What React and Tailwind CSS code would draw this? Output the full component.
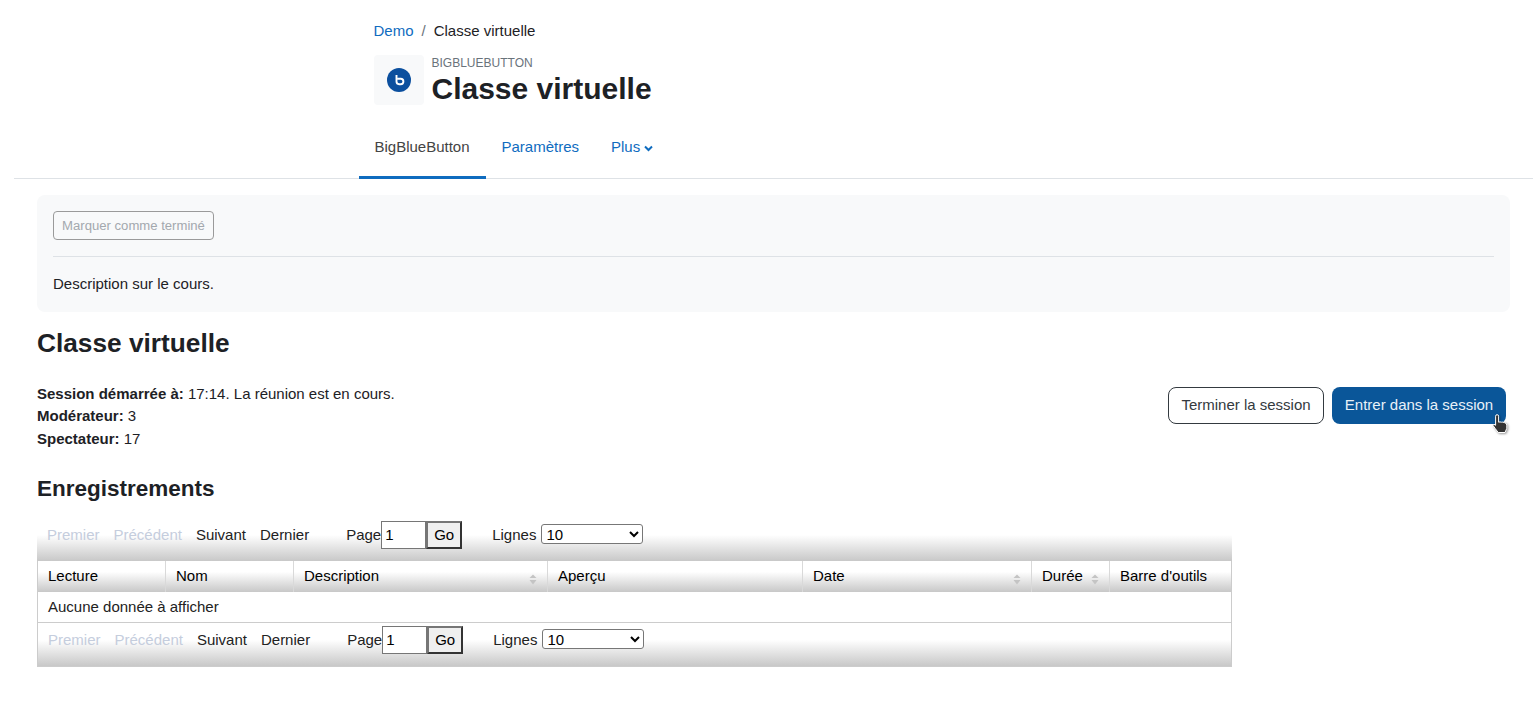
const columns = [
  { label: 'Lecture', width: 'w-[128px]' },
  { label: 'Nom', width: 'w-[128px]' },
  { label: 'Description', width: 'w-[254px]', sort: true },
  { label: 'Aperçu', width: 'w-[255px]' },
  { label: 'Date', width: 'w-[229px]', sort: true },
  { label: 'Durée', width: 'w-[78px]', sort: true },
  { label: "Barre d'outils", width: 'flex-1' },
]

function SortIcon() {
  return (
    <svg width="8" height="11" viewBox="0 0 8 11" className="absolute right-[10px] top-[13px]">
      <path d="M4 0.5 L7.5 4 H0.5 Z" fill="#c4c4c4" />
      <path d="M4 10.5 L7.5 6 H0.5 Z" fill="#c4c4c4" />
    </svg>
  )
}

function Pagination() {
  return (
    <div className="flex h-[40px] items-start bg-gradient-to-b from-white from-[35%] to-[#c8c8c8] pl-[10px] text-[15px] text-[#222]">
      <div className="flex h-[28px] items-center">
        <span className="text-[#c5cddd]">Premier</span>
        <span className="ml-[14px] text-[#c5cddd]">Précédent</span>
        <span className="ml-[14px]">Suivant</span>
        <span className="ml-[14px]">Dernier</span>
        <span className="ml-[37px]">Page</span>
        <input
          readOnly
          value="1"
          className="h-[28px] w-[45px] border border-[#767676] bg-white px-[3px] pb-[2px] text-[15px] text-black"
        />
        <button className="h-[28px] w-[36px] border-2 border-t-[#767676] border-r-[#333] border-b-[#333] border-l-[#767676] bg-[#efefef] text-[15px] text-black">
          Go
        </button>
        <span className="ml-[30px]">Lignes</span>
        <select className="mb-[2px] ml-[5px] h-[20px] w-[102px] rounded-[3px] border border-[#777] bg-white text-[15px] text-black" defaultValue="10">
          <option>10</option>
          <option>20</option>
        </select>
      </div>
    </div>
  )
}

export default function App() {
  return (
    <div className="h-[703px] overflow-hidden bg-white font-['Liberation_Sans',Arial,sans-serif] text-[15px] text-[#1d2125]">
      <header className="ml-[14px] mr-[5px] h-[179px] border-b border-[#dee2e6] pl-[344.5px]">
        <div className="flex h-[55px] items-start pl-[15px] pt-[22px] leading-[18px]">
          <a className="text-[#0f6cbf]">Demo</a>
          <span className="mx-[8px] text-[#6a737b]">/</span>
          <span>Classe virtuelle</span>
        </div>
        <div className="flex h-[50px] pl-[15px]">
          <div className="flex h-[50px] w-[50px] items-center justify-center rounded-[4px] bg-[#f8f9fa]">
            <svg width="24" height="24" viewBox="0 0 24 24">
              <circle cx="12" cy="12" r="12" fill="#0b4f9e" />
              <path d="M9.5 7v6.6a2.6 2.6 0 0 0 2.6 2.6h1.6a2.7 2.7 0 0 0 0-5.4h-3.2" fill="none" stroke="#fff" strokeWidth="1.9" />
            </svg>
          </div>
          <div className="ml-[8px]">
            <div className="mt-[1px] text-[12px] leading-[14px] text-[#6a737b]">BIGBLUEBUTTON</div>
            <h1 className="mt-[1px] text-[30px] font-bold leading-[36px]">Classe virtuelle</h1>
          </div>
        </div>
        <nav className="mt-[20px] flex h-[54px] text-[15px]">
          <div className="flex h-[54px] w-[127px] items-center justify-center border-b-[3px] border-[#0f6cbf] pb-[7px] text-[#444]">
            BigBlueButton
          </div>
          <div className="ml-[16px] flex h-[51px] items-center pb-[7px] text-[#0f6cbf]">Paramètres</div>
          <div className="ml-[32px] flex h-[51px] items-center gap-[4px] pb-[7px] text-[#0f6cbf]">
            Plus
            <svg width="9" height="7" viewBox="0 0 9 7" className="mt-[3px]">
              <path d="M1 1.5 L4.5 5 L8 1.5" fill="none" stroke="#0f6cbf" strokeWidth="2" />
            </svg>
          </div>
        </nav>
      </header>

      <main className="pl-[37px] pr-[28px]">
        <section className="mt-[16px] h-[117px] rounded-[8px] bg-[#f8f9fa] px-[16px] pt-[16px]">
          <button className="h-[29px] w-[161px] rounded-[4px] border border-[#9a9a9a] text-[13.125px] text-[#a3a8ae]">
            Marquer comme terminé
          </button>
          <div className="mt-[16px] border-t border-[#dee2e6]" />
          <p className="mt-[18px] leading-[18px]">Description sur le cours.</p>
        </section>

        <h2 className="mt-[15px] text-[26.25px] font-bold leading-[32px]">Classe virtuelle</h2>

        <div className="mt-[23.5px] flex justify-between pr-[4px]">
          <div className="leading-[22.5px]">
            <div><b>Session démarrée à:</b> 17:14. La réunion est en cours.</div>
            <div><b>Modérateur:</b> 3</div>
            <div><b>Spectateur:</b> 17</div>
          </div>
          <div className="mt-[4.5px] flex gap-[8px]">
            <button className="h-[37px] w-[156px] rounded-[8px] border border-[#343a40] bg-white text-[#343a40]">
              Terminer la session
            </button>
            <div className="relative">
              <button className="h-[37px] w-[174px] rounded-[8px] bg-[#0a5699] text-[#e8f1f8]">
                Entrer dans la session
              </button>
              {/* mouse cursor left in the capture */}
              <svg width="17" height="20" viewBox="0 0 17 20" className="absolute left-[160px] top-[27px] drop-shadow-[1px_1px_1px_rgba(0,0,0,0.4)]">
                <path
                  d="M3.6 2.2a1.5 1.5 0 0 1 3 0V8.2l1.4-.3 1.4.3 1.4-.1 1.6.5 1.8.9.6 1.6v3.2L13 18.5H6.2L3.2 14.5 1 11.5l1-1.2 1.6 1z"
                  fill="#333"
                  stroke="#fff"
                  strokeWidth="1"
                />
              </svg>
            </div>
          </div>
        </div>

        <h3 className="mt-[24.5px] text-[22.5px] font-bold leading-[28px]">Enregistrements</h3>

        <div className="mt-[18.5px] w-[1195px] text-[15px] text-[#222]">
          <Pagination />
          <div className="flex h-[31px] border-x border-[#ccc] bg-gradient-to-b from-white from-[35%] to-[#c8c8c8] text-black">
            {columns.map((col) => (
              <div
                key={col.label}
                className={`relative flex items-center border-r border-[#d9d9d9] pl-[10px] last:border-r-0 ${col.width}`}
              >
                {col.label}
                {col.sort && <SortIcon />}
              </div>
            ))}
          </div>
          <div className="flex h-[31px] items-center border-x border-b border-[#ccc] pl-[10px]">
            Aucune donnée à afficher
          </div>
          <div className="border-x border-b border-[#ccc] pt-[3px]">
            <Pagination />
          </div>
        </div>
      </main>
    </div>
  )
}
